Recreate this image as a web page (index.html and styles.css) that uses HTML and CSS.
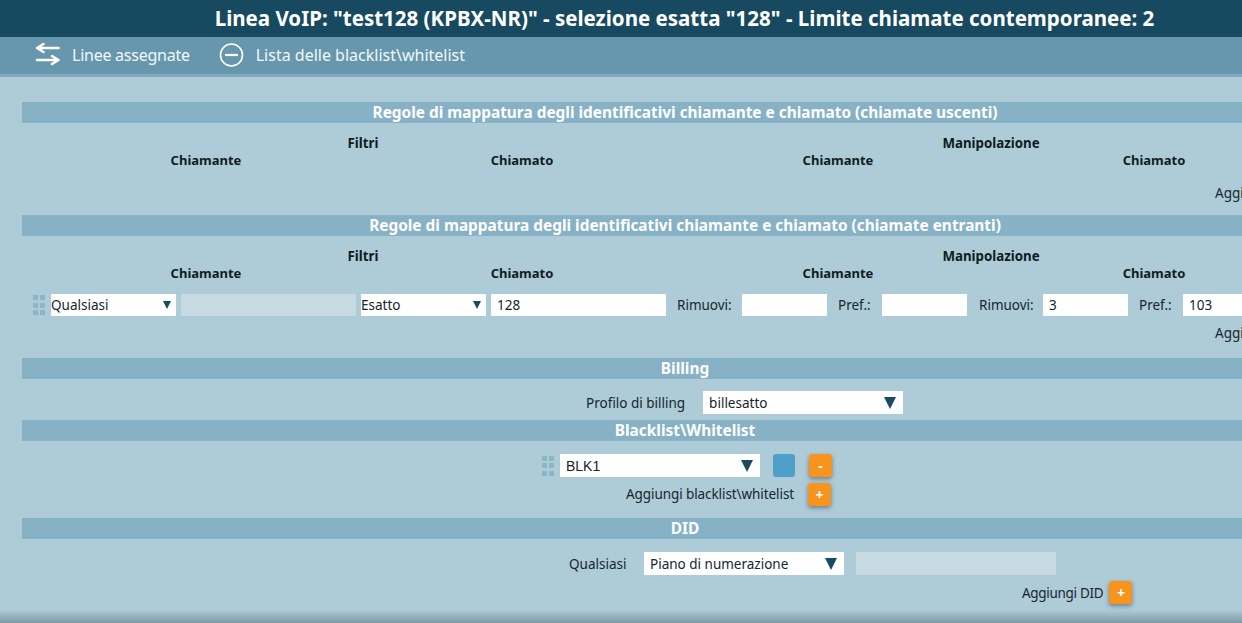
FILE: index.html
```html
<!DOCTYPE html>
<html lang="it">
<head>
<meta charset="utf-8">
<title>Linea VoIP</title>
<link rel="stylesheet" href="styles.css">
</head>
<body>
<div class="page">
  <header class="title">Linea VoIP: "test128 (KPBX-NR)" - selezione esatta "128" - Limite chiamate contemporanee: 2</header>
  <nav class="toolbar">
    <a class="tool tool-lines">
      <svg class="tool-icon" width="26" height="26" viewBox="0 0 26 26" fill="none" stroke="#fff" stroke-width="2.6" stroke-linecap="round" stroke-linejoin="round"><path d="M2 6h21.5M8.5 2 2 6l6.5 4"/><path d="M23.5 18H2M17 14l6.5 4-6.5 4"/></svg>
      <span>Linee assegnate</span>
    </a>
    <a class="tool">
      <svg class="tool-icon" width="26" height="26" viewBox="0 0 26 26" fill="none" stroke="#fff" stroke-width="1.6"><circle cx="12.5" cy="13" r="11"/><path d="M6 13h13" stroke-width="2.2"/></svg>
      <span>Lista delle blacklist\whitelist</span>
    </a>
  </nav>
  <main class="content">
    <section class="sec sec-out">
      <h2 class="bar">Regole di mappatura degli identificativi chiamante e chiamato (chiamate uscenti)</h2>
      <div class="heads">
        <div class="group">Filtri</div><div class="group group-m">Manipolazione</div>
        <div class="col">Chiamante</div><div class="col">Chiamato</div><div class="col">Chiamante</div><div class="col">Chiamato</div>
      </div>
      <div class="add-rule add-rule-out">Aggiungi regola</div>
    </section>
    <section class="sec sec-in">
      <h2 class="bar">Regole di mappatura degli identificativi chiamante e chiamato (chiamate entranti)</h2>
      <div class="heads">
        <div class="group">Filtri</div><div class="group group-m">Manipolazione</div>
        <div class="col">Chiamante</div><div class="col">Chiamato</div><div class="col">Chiamante</div><div class="col">Chiamato</div>
      </div>
      <div class="rule">
        <span class="handle"><i></i><i></i><i></i><i></i><i></i><i></i></span>
        <span class="sel sel-s"><select><option>Qualsiasi</option></select></span>
        <input class="inp inp-w" disabled>
        <span class="sel sel-s"><select><option>Esatto</option></select></span>
        <input class="inp inp-w" value="128">
        <label class="lb lb-r1">Rimuovi:</label><input class="inp inp-n">
        <label class="lb lb-p">Pref.:</label><input class="inp inp-n">
        <label class="lb lb-r2">Rimuovi:</label><input class="inp inp-n" value="3">
        <label class="lb lb-p">Pref.:</label><input class="inp inp-n" value="103">
      </div>
      <div class="add-rule add-rule-in">Aggiungi regola</div>
    </section>
    <section class="sec sec-bill">
      <h2 class="bar">Billing</h2>
      <div class="line line-bill">
        <label class="lb">Profilo di billing</label>
        <span class="sel sel-l"><select><option>billesatto</option></select></span>
      </div>
    </section>
    <section class="sec sec-bl">
      <h2 class="bar">Blacklist\Whitelist</h2>
      <div class="line line-blk">
        <span class="handle"><i></i><i></i><i></i><i></i><i></i><i></i></span>
        <span class="sel sel-l sel-arial"><select><option>BLK1</option></select></span>
        <span class="swatch"></span>
        <button class="btn btn-minus">-</button>
      </div>
      <div class="line line-add-bl">
        <span class="lb lb-bl">Aggiungi blacklist\whitelist</span>
        <button class="btn">+</button>
      </div>
    </section>
    <section class="sec sec-did">
      <h2 class="bar">DID</h2>
      <div class="line line-did">
        <label class="lb">Qualsiasi</label>
        <span class="sel sel-l"><select><option>Piano di numerazione</option></select></span>
        <input class="inp inp-did" disabled>
      </div>
      <div class="line line-add-did">
        <span class="lb lb-did">Aggiungi DID</span>
        <button class="btn">+</button>
      </div>
    </section>
  </main>
  <div class="fade"></div>
</div>
</body>
</html>
```
FILE: styles.css
```css
* { box-sizing: border-box; }
html, body { margin: 0; height: 623px; overflow: hidden; }
body { font-family: "Noto Sans", "Open Sans", sans-serif; font-size: 13.5px; color: #16262e; background: #aecbd8; }
.page { width: 1242px; height: 623px; overflow: hidden; display: flex; flex-direction: column; }

.title { height: 37px; flex: none; width: 1369px; background: #174a60; color: #fff; font-size: 20.5px; font-weight: 700; line-height: 37px; text-align: center; white-space: nowrap; }
.toolbar { height: 40px; flex: none; display: flex; align-items: center; gap: 29px; padding: 0 0 1px 35px; background: #6797ac; border-bottom: 3px solid #82aabc; color: #fff; font-size: 16px; }
.tool { display: flex; align-items: center; gap: 11px; color: #f2f7f9; }
.tool-lines span { letter-spacing: -.25px; }
.tool-icon { flex: none; display: block; }

.content { flex: 1 1 auto; min-height: 0; padding: 25px 0 0 22px; width: 1348px; }
.sec-in { margin-top: 11px; }
.sec-bill { margin-top: 14px; }
.sec-bl { margin-top: 6px; }
.sec-did { margin-top: 13px; }
.bar { margin: 0; height: 21px; background: #87b2c5; color: #fff; font-size: 15.4px; font-weight: 700; line-height: 21px; text-align: center; }

.heads { display: grid; grid-template-columns: repeat(4, 316px); grid-template-rows: 17px 16px; margin-left: 26px; padding-top: 12px; height: 45px; font-weight: 700; font-size: 13px; color: #101c22; text-align: center; line-height: 17px; }
.group { grid-column: span 2; padding-right: 2px; font-size: 13.3px; }
.group-m { padding-right: 10px; }

.add-rule { padding-left: 1193px; height: 22px; line-height: 22px; white-space: nowrap; }
.add-rule-out { margin-top: 14px; height: 22px; }
.add-rule-in { margin-top: 6px; }

.rule { display: flex; align-items: center; height: 22px; margin-top: 13px; padding-left: 11px; white-space: nowrap; }
.rule .sel, .rule .inp { margin-right: 5px; }
.rule .inp-n { margin-right: 0; }
.lb-r1 { margin-left: 6px; width: 65px; }
.lb-p { margin-left: 11px; width: 44px; }
.lb-r2 { margin-left: 12px; width: 64px; }

.handle { display: grid; grid-template-columns: 5px 5px; grid-auto-rows: 5px; gap: 2.5px 2px; width: 12px; margin-right: 6px; flex: none; }
.handle i { display: block; background: #8db5c8; }

.sel { position: relative; display: block; flex: none; background: #fff; }
.sel select { display: block; width: 100%; height: 100%; border: 0; margin: 0; padding: 0; background: transparent; appearance: none; -webkit-appearance: none; font: inherit; color: #16262e; border-radius: 0; outline: 0; }
.sel::after { content: ""; position: absolute; top: 50%; right: 5px; border-style: solid; border-color: #1d4a60 transparent transparent; border-width: 8px 4px 0; transform: translateY(-50%); pointer-events: none; }
.sel-s { width: 125px; height: 22px; }
.sel-l { width: 200px; height: 23px; }
.sel-l select { padding-left: 6px; }
.sel-l::after { right: 7px; border-width: 12px 6px 0; }
.sel-arial select { font-family: "Liberation Sans", Arial, sans-serif; font-size: 14px; }

.inp { display: block; flex: none; height: 22px; border: 0; padding: 0 6px; margin: 0; background: #fff; font: inherit; color: #16262e; border-radius: 0; outline: 0; }
.inp:disabled { background: #c7d9e1; }
.inp-w { width: 175px; }
.inp-n { width: 85px; }
.inp-did { width: 200px; height: 23px; }

.line { display: flex; align-items: center; white-space: nowrap; }
.line-bill { height: 23px; margin-top: 12px; padding-left: 564px; gap: 18px; margin-bottom: 6px; }
.line-blk { height: 23px; margin-top: 13px; padding-left: 520px; }
.line-add-bl { height: 22px; margin-top: 6px; padding-left: 604px; gap: 14px; }
.lb-bl { letter-spacing: -.08px; }
.line-did { height: 23px; margin-top: 13px; padding-left: 547px; }
.line-did .lb { width: 75px; }
.line-did .sel { margin-right: 12px; }
.line-add-did { height: 23px; margin-top: 6px; padding-left: 1000px; gap: 6px; }
.lb-did { letter-spacing: -.3px; }

.swatch { width: 22px; height: 23px; margin-left: 13px; background: #4ea0c9; border-radius: 3px; flex: none; }
.btn { width: 23px; height: 23px; padding: 0; border: 0; border-radius: 3px; background: #f7941e; color: #fff; font: 700 14px/23px "Noto Sans", sans-serif; text-align: center; box-shadow: 0 2px 4px rgba(40, 60, 70, .5); flex: none; }
.btn-minus { margin-left: 14px; }
.fade { flex: none; height: 13px; background: linear-gradient(to bottom, rgba(110, 135, 147, 0), rgba(110, 135, 147, .75)); }
```
